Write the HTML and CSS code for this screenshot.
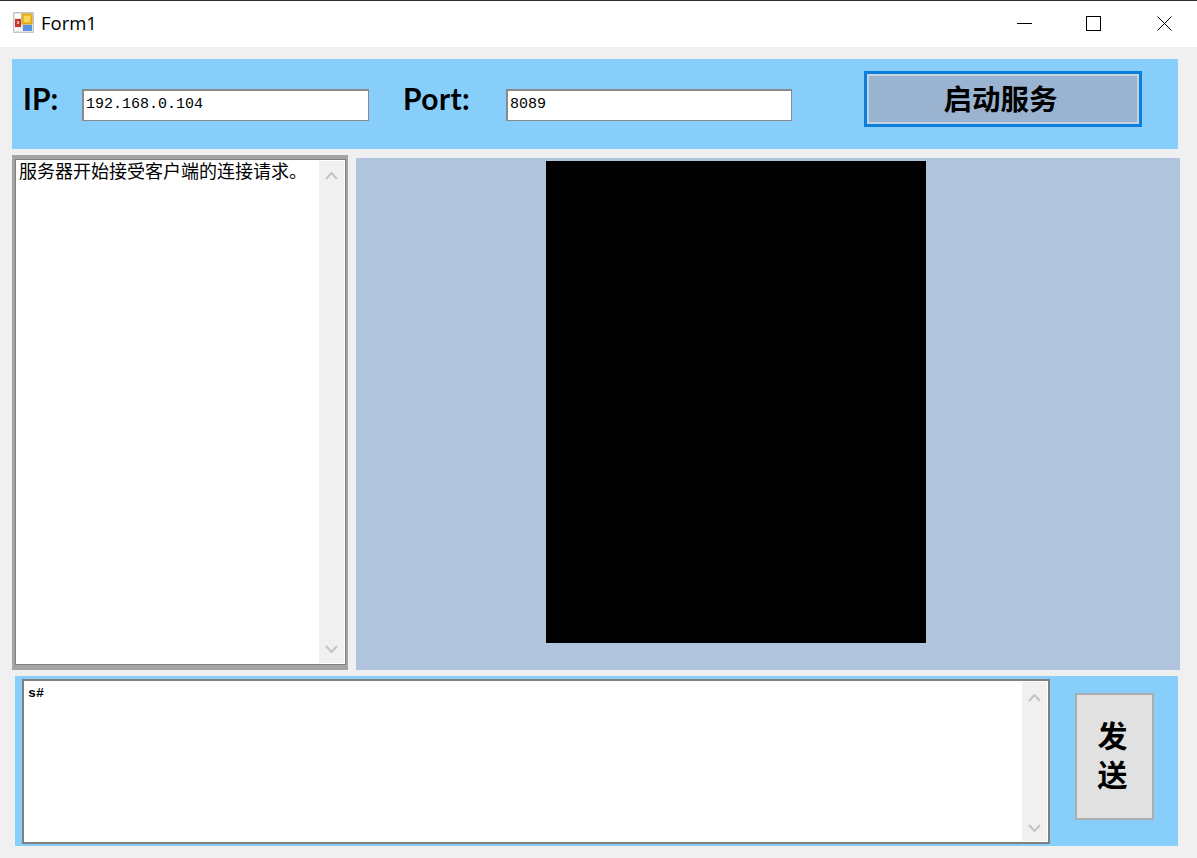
FILE: index.html
```html
<!DOCTYPE html>
<html lang="en">

<head>
    <meta charset="UTF-8">
    <meta name="viewport" content="width=device-width, initial-scale=1.0">
    <title>Form1</title>
    <link rel="stylesheet" href="styles.css">
</head>

<body>
    <header class="titlebar">
        <svg class="app-icon" width="21" height="21" viewBox="0 0 21 21">
            <rect x="0.5" y="0.5" width="20" height="20" fill="#e4e4e4" stroke="#c4c4c4" />
            <rect x="2" y="2" width="6" height="4" fill="#fff" />
            <rect x="2" y="7" width="6" height="8" fill="#c8372d" />
            <rect x="4" y="9" width="2" height="3" fill="#f0b0a0" />
            <rect x="9" y="2" width="10" height="10" fill="#f4b81f" stroke="#c99a2a" />
            <rect x="11" y="4" width="6" height="6" fill="#fad75f" />
            <rect x="2" y="16" width="3" height="3" fill="#fff" />
            <rect x="6" y="16" width="3" height="3" fill="#fff" />
            <rect x="10" y="13" width="9" height="6" fill="#5c93e0" />
        </svg>
        <span class="title-text">Form1</span>
        <div class="controls">
            <svg class="ctl-min" width="15" height="15" viewBox="0 0 15 15">
                <line x1="0" y1="7.5" x2="15" y2="7.5" stroke="#000" />
            </svg>
            <svg class="ctl-max" width="15" height="15" viewBox="0 0 15 15">
                <rect x="0.5" y="0.5" width="14" height="14" fill="none" stroke="#000" />
            </svg>
            <svg width="15" height="15" viewBox="0 0 15 15">
                <path d="M0.5 0.5 L14.5 14.5 M14.5 0.5 L0.5 14.5" stroke="#000" fill="none" />
            </svg>
        </div>
    </header>

    <main class="content">
        <section class="top-panel">
            <label class="field-label ip-label">IP:</label>
            <div class="text-box ip-box">192.168.0.104</div>
            <label class="field-label port-label">Port:</label>
            <div class="text-box port-box">8089</div>
            <button class="start-btn">启动服务</button>
        </section>

        <section class="middle">
            <div class="log-box">
                <div class="log-inner">
                    <div class="log-text">服务器开始接受客户端的连接请求。</div>
                    <div class="scrollbar log-scroll">
                        <svg width="13" height="9" viewBox="0 0 13 9">
                            <path d="M1 8 L6.5 2 L12 8" fill="none" stroke="#c4c4c4" stroke-width="2" />
                        </svg>
                        <svg width="13" height="9" viewBox="0 0 13 9">
                            <path d="M1 1 L6.5 7 L12 1" fill="none" stroke="#c4c4c4" stroke-width="2" />
                        </svg>
                    </div>
                </div>
            </div>
            <div class="picture-panel">
                <div class="picture"></div>
            </div>
        </section>

        <section class="bottom-panel">
            <div class="send-box">
                <div class="send-text">s#</div>
                <div class="scrollbar send-scroll">
                    <svg width="13" height="9" viewBox="0 0 13 9">
                        <path d="M1 8 L6.5 2 L12 8" fill="none" stroke="#c4c4c4" stroke-width="2" />
                    </svg>
                    <svg width="13" height="9" viewBox="0 0 13 9">
                        <path d="M1 1 L6.5 7 L12 1" fill="none" stroke="#c4c4c4" stroke-width="2" />
                    </svg>
                </div>
            </div>
            <button class="send-btn">发<br>送</button>
        </section>
    </main>
</body>

</html>
```
FILE: styles.css
```css
* {
    margin: 0;
    padding: 0;
    box-sizing: border-box;
}

body {
    width: 1197px;
    height: 858px;
    overflow: hidden;
    background: #f0f0f0;
    font-family: 'Noto Sans', 'Noto Sans CJK SC', sans-serif;
    color: #000;
}

.titlebar {
    height: 47px;
    background: #fff;
    border-top: 1px solid #2b2b2b;
    display: flex;
    align-items: center;
    padding-left: 13px;
    padding-bottom: 2px;
}

.app-icon {
    margin-right: 7px;
    margin-top: -2px;
}

.title-text {
    font-family: 'Open Sans', sans-serif;
    font-size: 18.5px;
    margin-top: -2px;
}

.controls {
    margin-left: auto;
    display: flex;
    padding-right: 25px;
}

.ctl-min {
    margin-right: 54px;
}

.ctl-max {
    margin-right: 56px;
}

.content {
    padding: 12px 17px 0 12px;
}

.top-panel {
    width: 1166px;
    height: 90px;
    background: #87cefa;
    display: flex;
    align-items: center;
}

.field-label {
    font-family: 'Lato', sans-serif;
    font-weight: 700;
    font-size: 30px;
    margin-top: -12px;
}

.ip-label {
    margin-left: 11px;
    width: 59px;
    flex: none;
}

.port-label {
    margin-left: 34px;
    width: 103px;
    letter-spacing: 0.4px;
    flex: none;
}

.text-box {
    height: 32px;
    margin-top: 2px;
    background: #fff;
    border: 2px solid #8a8a8a;
    border-right-width: 1px;
    border-bottom-width: 1px;
    font-family: 'Liberation Mono', monospace;
    font-size: 15px;
    line-height: 24px;
    padding-left: 2px;
    padding-top: 2px;
    flex: none;
}

.ip-box {
    width: 287px;
}

.port-box {
    width: 286px;
}

.start-btn {
    width: 278px;
    height: 56px;
    margin-left: 72px;
    margin-top: -10px;
    padding: 0 5px 4px 0;
    background: #9ab3d0;
    border: 3px solid #0a7fdc;
    box-shadow: inset 0 0 0 2px #c8d2de;
    font-family: 'Noto Sans CJK SC', sans-serif;
    font-weight: 700;
    font-size: 28.5px;
    color: #000;
}

.middle {
    display: flex;
    margin-top: 6px;
}

.log-box {
    width: 336px;
    height: 515px;
    background: #a4a4a4;
    padding: 5px 3px 6px 4px;
    flex: none;
}

.log-inner {
    height: 100%;
    background: #fff;
    display: flex;
    padding: 1px 1px 1px 0;
    outline: 1px solid #808080;
}

.log-text {
    flex: 1;
    white-space: nowrap;
    font-family: 'Noto Sans CJK SC', sans-serif;
    font-size: 18px;
    line-height: 18px;
    padding-left: 3px;
}

.scrollbar {
    width: 25px;
    background: #f0f0f0;
    display: flex;
    flex-direction: column;
    justify-content: space-between;
    align-items: center;
    flex: none;
}

.log-scroll {
    padding: 10px 0 9px;
}

.send-scroll {
    padding: 11px 0 8px;
}

.picture-panel {
    width: 824px;
    height: 512px;
    margin-top: 3px;
    margin-left: 8px;
    background: #b0c4de;
    padding: 3px 0 0 190px;
    flex: none;
}

.picture {
    width: 380px;
    height: 482px;
    background: #000;
}

.bottom-panel {
    width: 1163px;
    height: 170px;
    margin-top: 6px;
    margin-left: 3px;
    background: #87cefa;
    display: flex;
    align-items: flex-start;
    padding: 3px 0 0 7px;
}

.send-box {
    width: 1028px;
    height: 165px;
    background: #fff;
    border: 2px solid #808080;
    display: flex;
    padding: 1px 1px 1px 0;
    flex: none;
}

.send-text {
    flex: 1;
    font-family: 'Liberation Mono', monospace;
    font-weight: 700;
    font-size: 13.3px;
    line-height: 16px;
    padding-left: 4px;
    padding-top: 4px;
}

.send-btn {
    width: 79px;
    height: 127px;
    margin-left: 25px;
    margin-top: 14px;
    padding: 0 4px 5px 0;
    background: #e1e1e1;
    border: 2px solid #adadad;
    font-family: 'Noto Sans CJK SC', sans-serif;
    font-weight: 700;
    font-size: 30px;
    line-height: 39px;
    color: #000;
}
```
